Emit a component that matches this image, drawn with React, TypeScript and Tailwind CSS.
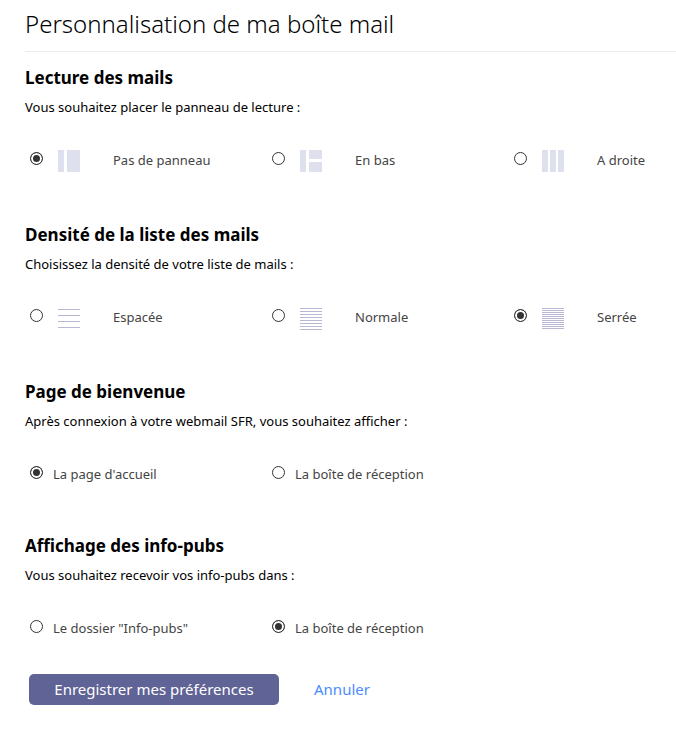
import React from 'react';

interface Option {
  id: string;
  label: string;
  icon?: React.ReactNode;
}

interface PreferenceSectionProps {
  name: string;
  title: string;
  description: string;
  options: Option[];
  selected: string;
}

interface Block {
  x: number;
  y: number;
  width: number;
  height: number;
}

const BlocksIcon: React.FC<{ blocks: Block[] }> = ({ blocks }) => (
  <svg width="22" height="22" viewBox="0 0 22 22" fill="#dfe0ee" shapeRendering="crispEdges" aria-hidden="true">
    {blocks.map((block) => (
      <rect key={`${block.x}-${block.y}`} {...block} />
    ))}
  </svg>
);

const LinesIcon: React.FC<{ start: number; step: number; count: number }> = ({ start, step, count }) => (
  <svg width="22" height="23" viewBox="0 0 22 23" fill="#b9b8d2" shapeRendering="crispEdges" aria-hidden="true">
    {Array.from({ length: count }, (_, i) => (
      <rect key={i} x="0" y={start + i * step} width="22" height="1" />
    ))}
  </svg>
);

const sections: PreferenceSectionProps[] = [
  {
    name: 'panel',
    title: 'Lecture des mails',
    description: 'Vous souhaitez placer le panneau de lecture :',
    selected: 'none',
    options: [
      {
        id: 'none',
        label: 'Pas de panneau',
        icon: (
          <BlocksIcon
            blocks={[
              { x: 0, y: 0, width: 6, height: 22 },
              { x: 9, y: 0, width: 13, height: 22 },
            ]}
          />
        ),
      },
      {
        id: 'bottom',
        label: 'En bas',
        icon: (
          <BlocksIcon
            blocks={[
              { x: 0, y: 0, width: 6, height: 22 },
              { x: 9, y: 0, width: 13, height: 9 },
              { x: 9, y: 12, width: 13, height: 10 },
            ]}
          />
        ),
      },
      {
        id: 'right',
        label: 'A droite',
        icon: (
          <BlocksIcon
            blocks={[
              { x: 0, y: 0, width: 6, height: 22 },
              { x: 8, y: 0, width: 6, height: 22 },
              { x: 16, y: 0, width: 6, height: 22 },
            ]}
          />
        ),
      },
    ],
  },
  {
    name: 'density',
    title: 'Densité de la liste des mails',
    description: 'Choisissez la densité de votre liste de mails :',
    selected: 'tight',
    options: [
      { id: 'spaced', label: 'Espacée', icon: <LinesIcon start={2} step={6} count={4} /> },
      { id: 'normal', label: 'Normale', icon: <LinesIcon start={1} step={3} count={8} /> },
      { id: 'tight', label: 'Serrée', icon: <LinesIcon start={1} step={2} count={11} /> },
    ],
  },
  {
    name: 'welcome',
    title: 'Page de bienvenue',
    description: 'Après connexion à votre webmail SFR, vous souhaitez afficher :',
    selected: 'home',
    options: [
      { id: 'home', label: "La page d'accueil" },
      { id: 'inbox', label: 'La boîte de réception' },
    ],
  },
  {
    name: 'pubs',
    title: 'Affichage des info-pubs',
    description: 'Vous souhaitez recevoir vos info-pubs dans :',
    selected: 'inbox',
    options: [
      { id: 'folder', label: 'Le dossier "Info-pubs"' },
      { id: 'inbox', label: 'La boîte de réception' },
    ],
  },
];

const PreferenceSection: React.FC<PreferenceSectionProps> = ({ name, title, description, options, selected }) => (
  <section>
    <h2 id={`${name}-title`} className="text-[17px] leading-6 font-bold">
      {title}
    </h2>
    <p className="mt-[7px] text-[13px] leading-5">{description}</p>
    <div
      role="radiogroup"
      aria-labelledby={`${name}-title`}
      className="mt-[31px] grid grid-cols-[242px_242px_1fr] text-[13px] leading-6 text-[#444]"
    >
      {options.map((option) => (
        <label key={option.id} className={`flex items-start pl-[5px] ${option.icon ? 'h-[27px]' : 'h-6'}`}>
          <input
            type="radio"
            name={name}
            value={option.id}
            defaultChecked={option.id === selected}
            className="mt-1 size-[13px] shrink-0 appearance-none rounded-full border border-[#333] bg-white checked:bg-[#333] checked:shadow-[inset_0_0_0_2px_white]"
          />
          {option.icon && <span className="mt-0.5 mr-[23px] ml-[15px] shrink-0">{option.icon}</span>}
          <span className="ml-2.5 whitespace-nowrap">{option.label}</span>
        </label>
      ))}
    </div>
  </section>
);

const App: React.FC = () => (
  <main className="bg-white pt-2 pb-11 pl-[25px] font-['Noto_Sans',sans-serif] text-black">
    <h1 className="border-b border-[#ebebeb] pb-[11px] text-2xl leading-8 font-light">
      Personnalisation de ma boîte mail
    </h1>
    <form className="mt-3.5" onSubmit={(e) => e.preventDefault()}>
      <div className="flex flex-col gap-12">
        {sections.map((section) => (
          <PreferenceSection key={section.name} {...section} />
        ))}
      </div>
      <div className="mt-[34px] ml-1 flex items-center gap-[35px] text-[15px]">
        <button type="submit" className="h-[31px] w-[250px] rounded-[5px] bg-[#5f6396] text-white">
          Enregistrer mes préférences
        </button>
        <a href="#annuler" className="text-[#4a8cff]">
          Annuler
        </a>
      </div>
    </form>
  </main>
);

export default App;
